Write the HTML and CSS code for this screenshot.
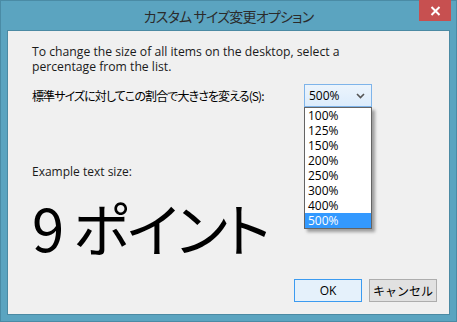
FILE: index.html
```html
<!DOCTYPE html>
<html lang="ja">
<head>
  <meta charset="UTF-8">
  <title>カスタム サイズ変更オプション</title>
  <link rel="stylesheet" href="styles.css">
</head>
<body>
  <div class="window">
    <div class="titlebar">
      <span class="title">カスタム サイズ変更オプション</span>
      <div class="close">
        <svg width="11" height="10" viewBox="0 0 11 10">
          <path d="M1.5 1 L9.5 9 M9.5 1 L1.5 9" stroke="#fff" stroke-width="2"/>
        </svg>
      </div>
    </div>

    <div class="client">
      <p class="intro">To change the size of all items on the desktop, select a<br>percentage from the list.</p>

      <div class="scale-row">
        <span class="label">標準サイズに対してこの割合で大きさを変える(S):</span>
        <div class="combo">
          <div class="combo-box">
            <span>500%</span>
            <svg width="9" height="6" viewBox="0 0 9 6">
              <path d="M1 1 L4.5 4.5 L8 1" stroke="#555" stroke-width="1.6" fill="none"/>
            </svg>
          </div>
          <ul class="combo-list">
            <li>100%</li>
            <li>125%</li>
            <li>150%</li>
            <li>200%</li>
            <li>250%</li>
            <li>300%</li>
            <li>400%</li>
            <li class="selected">500%</li>
          </ul>
        </div>
      </div>

      <p class="example-label">Example text size:</p>
      <p class="example">9 ポイント</p>

      <div class="actions">
        <button class="btn default">OK</button>
        <button class="btn">キャンセル</button>
      </div>
    </div>
  </div>
</body>
</html>
```

FILE: styles.css
```css
body {
  margin: 0;
  font-family: "Open Sans", "Noto Sans CJK JP", sans-serif;
  font-size: 12px;
  color: #000;
}

.window {
  width: 457px;
  height: 322px;
  box-sizing: border-box;
  border: 1px solid #4a8ba5;
  background: #5ba4c0;
  display: flex;
  flex-direction: column;
  position: relative;
}

.titlebar {
  height: 29px;
  display: flex;
  justify-content: center;
  align-items: center;
}

.title {
  font-family: "Noto Sans CJK JP", sans-serif;
  font-feature-settings: "palt";
  font-size: 14px;
  letter-spacing: -0.8px;
  color: #2b2b2b;
  padding-top: 1px;
}

.close {
  position: absolute;
  top: -1px;
  right: 5px;
  width: 32px;
  height: 21px;
  background: #c75050;
  display: flex;
  justify-content: center;
  align-items: center;
}

.client {
  flex: 1;
  margin: 0 6px 6px;
  border: 1px solid #4b8aa3;
  background: #f0f0f0;
  padding: 13px 24px 0;
  display: flex;
  flex-direction: column;
}

.intro {
  margin: 0;
  font-size: 12.2px;
  line-height: 15px;
  color: #1a1a1a;
}

.scale-row {
  display: flex;
  align-items: center;
  margin-top: 10px;
}

.label {
  font-family: "Noto Sans CJK JP", sans-serif;
  font-feature-settings: "palt";
  font-size: 12px;
  letter-spacing: -0.9px;
  width: 272px;
}

.combo {
  position: relative;
}

.combo-box {
  height: 21px;
  border: 1px solid #7eb4ea;
  background: linear-gradient(#ecf4fc, #dcecfc);
  display: flex;
  align-items: center;
  justify-content: space-between;
  padding: 0 6px 0 4px;
  width: 56px;
}

.combo-list {
  position: absolute;
  top: 23px;
  left: 0;
  width: 66px;
  margin: 0;
  padding: 0;
  list-style: none;
  background: #fff;
  border: 1px solid #646464;
  box-shadow: 3px 3px 3px rgba(0, 0, 0, 0.35);
}

.combo-list li {
  height: 15px;
  line-height: 15px;
  padding-left: 3px;
}

.combo-list .selected {
  background: #3399ff;
  color: #fff;
}

.example-label {
  margin: 56px 0 0;
  color: #1a1a1a;
}

.example {
  margin: 14px 0 0;
  font-family: "Noto Sans CJK JP", sans-serif;
  font-feature-settings: "palt";
  font-size: 58px;
  letter-spacing: -2px;
  line-height: 66px;
}

.actions {
  margin: auto -12px 12px 0;
  display: flex;
  justify-content: flex-end;
  gap: 7px;
}

.btn {
  width: 68px;
  height: 23px;
  font-family: "Open Sans", "Noto Sans CJK JP", sans-serif;
  font-size: 12px;
  border: 1px solid #adadad;
  background: #e1e1e1;
  padding: 0;
  color: #000;
}

.btn.default {
  border-color: #3c9bf0;
  background: #e5f1fb;
}
```
